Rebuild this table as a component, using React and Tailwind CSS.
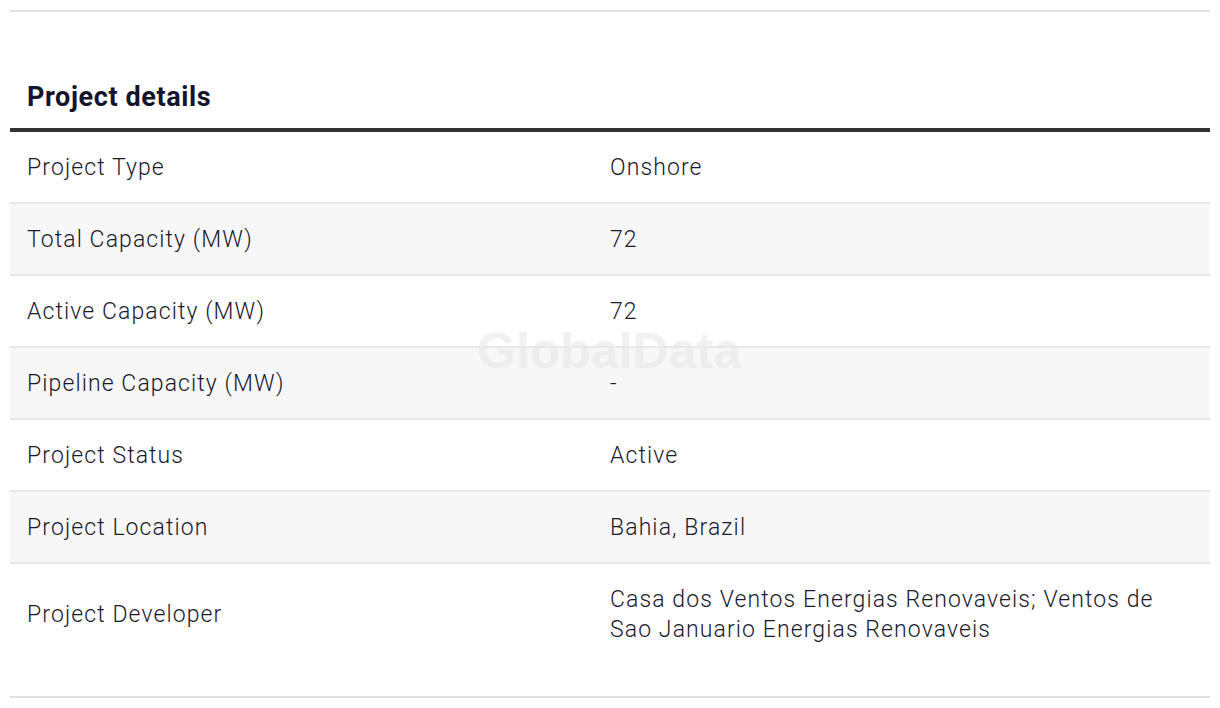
const rows = [
  { label: "Project Type", value: "Onshore" },
  { label: "Total Capacity (MW)", value: "72" },
  { label: "Active Capacity (MW)", value: "72" },
  { label: "Pipeline Capacity (MW)", value: "-" },
  { label: "Project Status", value: "Active" },
  { label: "Project Location", value: "Bahia, Brazil" },
  {
    label: "Project Developer",
    value: "Casa dos Ventos Energias Renovaveis; Ventos de Sao Januario Energias Renovaveis",
  },
];

export default function App() {
  return (
    <div className="min-h-[708px] bg-white px-[10px] pt-[10px] text-[#1a1a2e]" style={{ fontFamily: "Roboto, 'Noto Sans', sans-serif" }}>
      <div className="h-[2px] bg-[#e1e1e1]" />

      <h2 className="pl-[17px] pt-[68px] pb-[14px] text-[27px] font-bold leading-[34px] tracking-[0.6px] text-[#14142b]">Project details</h2>

      <div className="relative border-t-4 border-[#333333]">
        {rows.map((row, i) => (
          <div
            key={row.label}
            className={`grid grid-cols-[584px_1fr] items-center text-[23px] font-light leading-[30px] tracking-[1.1px] ${i % 2 === 1 ? "bg-[#f7f7f7]" : "bg-white"} ${i < rows.length - 1 ? "border-b-2 border-[#e8e8e8]" : ""}`}
          >
            <div className="pt-[21px] pb-[19px] pl-[17px]">{row.label}</div>
            <div className="pt-[21px] pb-[19px] pl-[16px] pr-[30px]">{row.value}</div>
          </div>
        ))}
        <div className="h-[32px]" />

        <div className="pointer-events-none absolute left-[467px] top-[194px] select-none text-[50px] font-bold leading-none text-[#e8e8e8] opacity-60" style={{ fontFamily: "'Liberation Sans', Arial, sans-serif" }}>
          GlobalData
        </div>
      </div>

      <div className="h-[2px] bg-[#e1e1e1]" />
    </div>
  );
}
